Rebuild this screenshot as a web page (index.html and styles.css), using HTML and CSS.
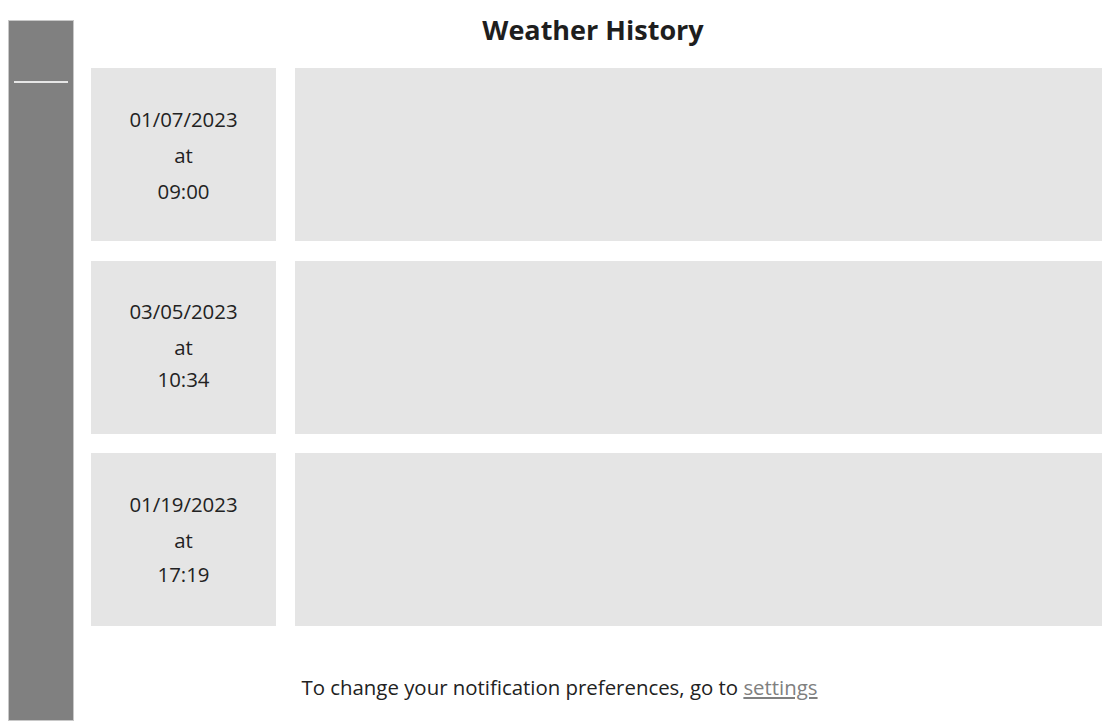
FILE: index.html
```html
<!DOCTYPE html>
<html>
<head>
<meta charset="utf-8">
<link rel="stylesheet" href="styles.css">
</head>
<body>
<div class="layout">
  <aside class="sidebar">
    <div class="sidebar-rule"></div>
  </aside>
  <main class="main">
    <h1 class="title">Weather History</h1>
    <div class="list">
      <div class="row">
        <div class="date-card"><span>01/07/2023</span><span>at</span><span>09:00</span></div>
        <div class="detail-card"></div>
      </div>
      <div class="row">
        <div class="date-card"><span>03/05/2023</span><span>at</span><span class="time-tight">10:34</span></div>
        <div class="detail-card"></div>
      </div>
      <div class="row">
        <div class="date-card"><span>01/19/2023</span><span>at</span><span class="time-mid">17:19</span></div>
        <div class="detail-card"></div>
      </div>
    </div>
    <p class="footer">To change your notification preferences, go to <a href="#" class="link">settings</a></p>
  </main>
</div>
</body>
</html>
```
FILE: styles.css
```css
body {
  margin: 8px;
  font-family: "Open Sans", "Liberation Sans", sans-serif;
  color: #222;
  background: #fff;
}
.layout {
  display: flex;
  align-items: flex-start;
}
.sidebar {
  box-sizing: border-box;
  width: 66px;
  height: 701px;
  margin-top: 12px;
  background: #808080;
  border: 1px solid #c8c8c8;
  padding: 60px 5px 0;
  flex-shrink: 0;
}
.sidebar-rule {
  height: 2px;
  background: #e6e6e6;
}
.main {
  flex: 1;
  margin-left: 17px;
  margin-right: 4px;
}
.title {
  margin: 0 0 16px -7px;
  font-size: 27px;
  font-weight: 700;
  line-height: 44px;
  text-align: center;
  color: #1e1e1e;
}
.list {
  display: flex;
  flex-direction: column;
  gap: 19.5px;
}
.row {
  display: flex;
  gap: 19px;
  height: 173px;
}
.date-card {
  width: 185px;
  flex-shrink: 0;
  background: #e5e5e5;
  display: flex;
  flex-direction: column;
  align-items: center;
  justify-content: center;
  font-size: 20.4px;
  line-height: 36px;
  color: #222;
}
.time-tight {
  margin-top: -4px;
  margin-bottom: 4px;
}
.time-mid {
  margin-top: -2px;
  margin-bottom: 2px;
}
.detail-card {
  flex: 1;
  background: #e5e5e5;
}
.footer {
  margin: 47px 0 0 -74px;
  font-size: 20.4px;
  line-height: 28px;
  text-align: center;
  color: #222;
}
.link {
  color: #808080;
}
```
